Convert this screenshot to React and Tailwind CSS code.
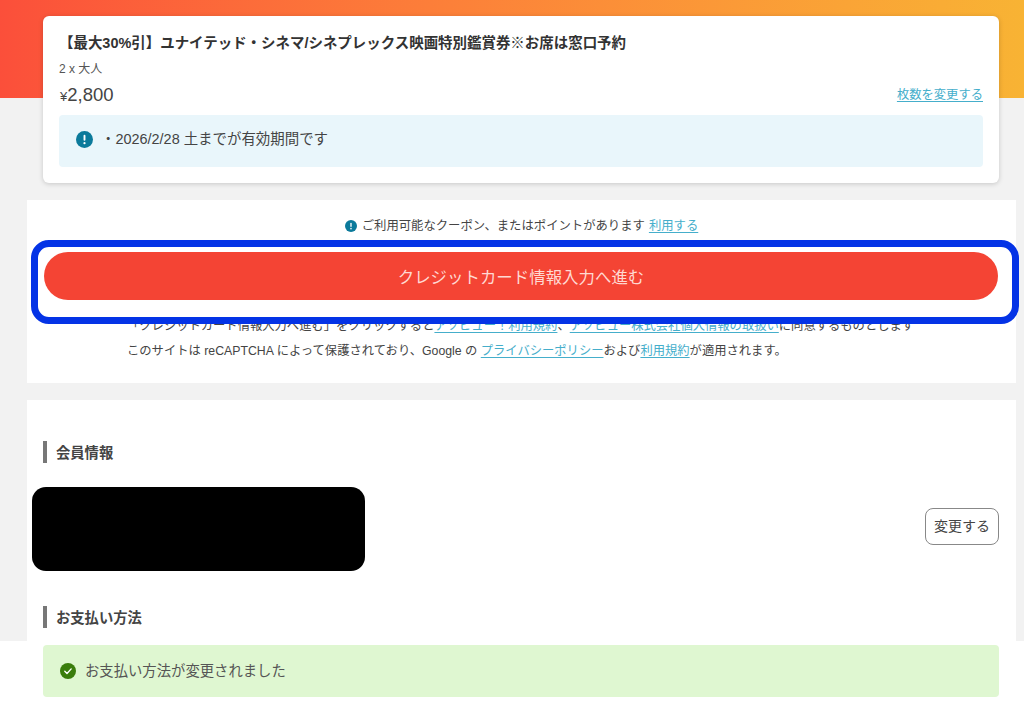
function InfoIcon({ className }) {
  return (
    <svg viewBox="0 0 16 16" className={className}>
      <circle cx="8" cy="8" r="8" fill="#0b7a9b" />
      <rect x="7.1" y="3.6" width="1.8" height="5.6" rx="0.9" fill="#fff" />
      <circle cx="8" cy="11.5" r="1.05" fill="#fff" />
    </svg>
  );
}

function CheckIcon({ className }) {
  return (
    <svg viewBox="0 0 16 16" className={className}>
      <circle cx="8" cy="8" r="8" fill="#3a7d0c" />
      <path d="M4.8 8.3l2.2 2.2 4.2-4.6" fill="none" stroke="#fff" strokeWidth="1.4" strokeLinecap="round" strokeLinejoin="round" />
    </svg>
  );
}

function SectionHeading({ children }) {
  return (
    <h2 className="flex h-[22px] items-center border-l-4 border-[#777777] pl-[9px] pt-[3px] text-[14.3px] font-bold text-[#444444]">
      {children}
    </h2>
  );
}

function TextLink({ children, className = '' }) {
  return <a className={`text-[#45aecb] underline underline-offset-2 ${className}`}>{children}</a>;
}

export default function App() {
  return (
    <div className="relative h-[706px] w-[1024px] overflow-hidden bg-[#f2f2f2] font-['Liberation_Sans','Noto_Sans_CJK_JP',sans-serif] text-[#444444]">
      {/* Header band */}
      <div className="h-[98px] bg-gradient-to-r from-[#fb4f3a] to-[#f8b334]" />

      <main className="-mt-[82px] flex flex-col">
        {/* Ticket card */}
        <section className="ml-[43px] mr-[25px] h-[167px] rounded-md bg-white px-[16px] pt-[17px] shadow-[0_1px_5px_rgba(0,0,0,0.18)]">
          <h1 className="whitespace-nowrap text-[14.46px] font-bold leading-[21px] text-[#333333]">
            【最大30%引】ユナイテッド・シネマ/シネプレックス映画特別鑑賞券※お席は窓口予約
          </h1>
          <p className="mt-[7px] text-[12px] leading-[16px] text-[#555555]">2 x 大人</p>
          <div className="mt-[6px] flex h-[24px] items-center justify-between">
            <span className="ml-px text-[18.5px] text-[#444444]"><span className="text-[13px]">¥</span>2,800</span>
            <TextLink className="text-[12.3px]">枚数を変更する</TextLink>
          </div>
          <div className="mt-[8px] flex h-[52px] items-center gap-[8px] rounded-sm bg-[#e9f6fb] pb-[3px] pl-[17px] text-[14.45px]">
            <InfoIcon className="h-[17px] w-[17px]" />
            <span>・2026/2/28 土までが有効期間です</span>
          </div>
        </section>

        {/* Submit panel */}
        <section className="relative ml-[27px] mr-[8px] mt-[17px] h-[183px] bg-white pt-[16px]">
          <div className="flex h-[20px] items-center justify-center text-[12.35px]">
            <InfoIcon className="mr-[5px] h-[12px] w-[12px]" />
            <span>ご利用可能なクーポン、またはポイントがあります</span>
            <TextLink className="ml-[4px]">利用する</TextLink>
          </div>
          <button
            type="button"
            className="mx-[17px] mt-[16px] flex h-[48px] w-[954px] items-center justify-center rounded-full bg-[#f44434] pt-[2px] text-[16.45px] text-[#ffd9d2]"
          >
            クレジットカード情報入力へ進む
          </button>
          <div className="mt-[14px] pl-[100px] text-[12.3px] leading-[25px]">
            <p className="whitespace-nowrap">
              「クレジットカード情報入力へ進む」をクリックすると<TextLink>アソビュー！利用規約</TextLink>、<TextLink>アソビュー株式会社個人情報の取扱い</TextLink>に同意するものとします
            </p>
            <p className="whitespace-nowrap">
              このサイトは reCAPTCHA によって保護されており、Google の <TextLink>プライバシーポリシー</TextLink>および<TextLink>利用規約</TextLink>が適用されます。
            </p>
          </div>
          {/* Highlight frame drawn over the button */}
          <div className="pointer-events-none absolute left-[4px] top-[40px] h-[84px] w-[988px] rounded-[18px] border-[7px] border-[#0433e6]" />
        </section>

        {/* Member and payment panel */}
        <section className="ml-[27px] mr-[8px] mt-[17px] h-[241px] bg-white px-[16px] pt-[41px]">
          <SectionHeading>会員情報</SectionHeading>
          <div className="mt-[24px] flex h-[84px] items-start justify-between">
            <div className="-ml-[11px] h-[84px] w-[333px] rounded-[14px] bg-black" />
            <button
              type="button"
              className="mr-px mt-[21px] h-[37px] w-[74px] rounded-lg border border-[#888888] bg-white text-[14px] text-[#444444]"
            >
              変更する
            </button>
          </div>
          <div className="mt-[35px]">
            <SectionHeading>お支払い方法</SectionHeading>
          </div>
        </section>

        {/* Notice */}
        <div className="h-[65px] bg-white pl-[43px] pr-[25px] pt-[4px]">
          <div className="flex h-[52px] items-center gap-[9px] rounded-sm bg-[#dff7d1] pl-[17px] text-[14.35px] text-[#555555]">
            <CheckIcon className="-mt-[1px] h-[16px] w-[16px]" />
            <span className="pt-[1px]">お支払い方法が変更されました</span>
          </div>
        </div>
      </main>
    </div>
  );
}
